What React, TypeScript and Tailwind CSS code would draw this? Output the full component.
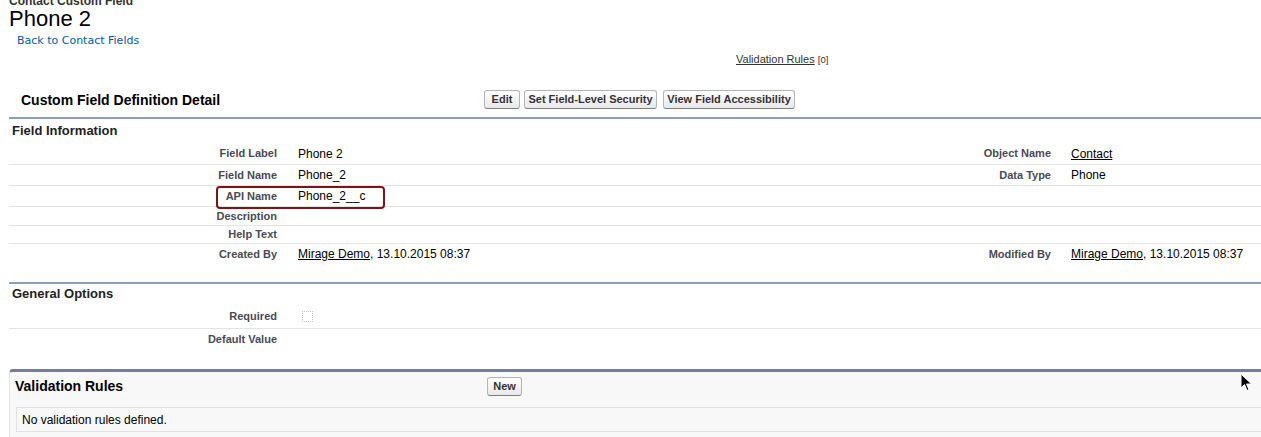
import React from 'react';

const font = { fontFamily: '"Liberation Sans", Arial, sans-serif' };

type Cell = { label?: string; value?: React.ReactNode };
type Row = { h: string; left: Cell; right?: Cell; last?: boolean; boxed?: boolean };

const Btn: React.FC<{ w: string; children: React.ReactNode; className?: string }> = ({ w, children, className }) => (
  <button
    className={`${w} ${className ?? ''} h-[19px] flex items-center justify-center rounded-[3px] border border-[#b5b5b5] border-b-[#7f7f7f] bg-gradient-to-b from-white to-[#e9e9ea] text-[11px] font-bold text-[#333] leading-none`}
  >
    {children}
  </button>
);

const Mirage = () => (
  <>
    <span className="underline">Mirage Demo</span>, 13.10.2015 08:37
  </>
);

const infoRows: Row[] = [
  { h: 'h-[22px]', left: { label: 'Field Label', value: 'Phone 2' }, right: { label: 'Object Name', value: <span className="underline">Contact</span> } },
  { h: 'h-[21px]', left: { label: 'Field Name', value: 'Phone_2' }, right: { label: 'Data Type', value: 'Phone' } },
  { h: 'h-[21px]', left: { label: 'API Name', value: 'Phone_2__c' }, boxed: true },
  { h: 'h-[19px]', left: { label: 'Description' } },
  { h: 'h-[18px]', left: { label: 'Help Text' } },
  { h: 'h-[20px]', left: { label: 'Created By', value: <Mirage /> }, right: { label: 'Modified By', value: <Mirage /> }, last: true },
];

const DetailRow: React.FC<{ row: Row }> = ({ row }) => (
  <div
    className={`relative grid grid-cols-[278px_496px_278px_1fr] ${row.h} ${row.last ? '' : 'border-b border-[#e3e3e3]'}`}
  >
    <div className="flex items-center justify-end pr-[10px] text-[11px] font-bold text-[#4a4a56]">{row.left.label}</div>
    <div className="flex items-center pl-[11px] text-[12px] text-black whitespace-nowrap">{row.left.value}</div>
    <div className="flex items-center justify-end pr-[10px] text-[11px] font-bold text-[#4a4a56]">{row.right?.label}</div>
    <div className="flex items-center pl-[10px] text-[12px] text-black whitespace-nowrap">{row.right?.value}</div>
    {row.boxed && (
      <div className="absolute left-[207px] top-0 w-[169px] h-[23px] rounded-[4px] border-2 border-[#7a1518]" />
    )}
  </div>
);

export default function App() {
  return (
    <div className="relative w-[1261px] h-[437px] overflow-hidden bg-white" style={font}>
      {/* page title */}
      <div className="mt-[-5px] pl-[9px] text-[12px] leading-[12px] font-bold text-[#333]">Contact Custom Field</div>
      <h1 className="mt-[1px] pl-[9px] text-[22px] leading-[22px] text-black">Phone 2</h1>
      <div className="mt-[4px] pl-[17px] text-[11px] leading-[14px] text-[#015ba7]" style={{ fontFamily: '"DejaVu Sans", Verdana, sans-serif' }}>
        Back to Contact Fields
      </div>
      <div className="mt-[4px] pl-[736px] text-[11px] leading-[14px] text-[#333]">
        <span className="underline">Validation Rules</span> <span className="text-[9.5px]">[0]</span>
      </div>

      {/* detail header */}
      <div className="ml-[9px] flex items-start h-[50px]">
        <div className="w-[475px] pl-[12px] mt-[25px] text-[14px] leading-[16px] font-bold text-black">
          Custom Field Definition Detail
        </div>
        <div className="flex mt-[23px]">
          <Btn w="w-[36px]">Edit</Btn>
          <Btn w="w-[133px]" className="ml-[4px]">Set Field-Level Security</Btn>
          <Btn w="w-[132px]" className="ml-[6px]">View Field Accessibility</Btn>
        </div>
      </div>

      {/* Field Information */}
      <div className="ml-[9px] border-t-2 border-[#8f9dbd]">
        <div className="h-[24px] pt-[4px] pl-[3px] text-[13px] leading-[16px] font-bold text-[#222]">Field Information</div>
        {infoRows.map((r, i) => (
          <DetailRow key={i} row={r} />
        ))}
      </div>

      {/* General Options */}
      <div className="mt-[18px] ml-[9px] border-t-2 border-[#8f9dbd]">
        <div className="h-[21px] pt-[2px] pl-[3px] text-[13px] leading-[16px] font-bold text-[#222]">General Options</div>
        <div className="grid grid-cols-[278px_1fr] h-[24px] border-b border-[#e3e3e3]">
          <div className="flex items-center justify-end pr-[10px] text-[11px] font-bold text-[#4a4a56]">Required</div>
          <div className="flex items-center pl-[15px]">
            <span className="block w-[11px] h-[11px] border border-dotted border-[#c4c4c4]" />
          </div>
        </div>
        <div className="grid grid-cols-[278px_1fr] h-[21px]">
          <div className="flex items-center justify-end pr-[10px] text-[11px] font-bold text-[#4a4a56]">Default Value</div>
          <div />
        </div>
      </div>

      {/* Validation Rules related list */}
      <div className="mt-[19px] ml-[9px] h-[80px] rounded-tl-[4px] border-t-[3px] border-l border-t-[#747e96] border-l-[#e4e4e4] bg-[#f8f8f8]">
        <div className="flex items-start h-[35px]">
          <div className="w-[477px] pl-[5px] mt-[6px] text-[14px] leading-[16px] font-bold text-black">Validation Rules</div>
          <Btn w="w-[35px]" className="mt-[5px]">New</Btn>
        </div>
        <div className="ml-[6px] h-[25px] flex items-center pl-[5px] border-y border-l border-[#e0e3e5] text-[12px] text-black">
          No validation rules defined.
        </div>
      </div>

      {/* mouse cursor */}
      <svg className="absolute left-[1240px] top-[373px]" width="13" height="19" viewBox="0 0 13 19">
        <path d="M1 1 L1 15 L4.5 11.5 L7 17.5 L9 16.6 L6.6 11 L11.5 11 Z" fill="#000" stroke="#fff" strokeWidth="1" strokeLinejoin="round" />
      </svg>
    </div>
  );
}
